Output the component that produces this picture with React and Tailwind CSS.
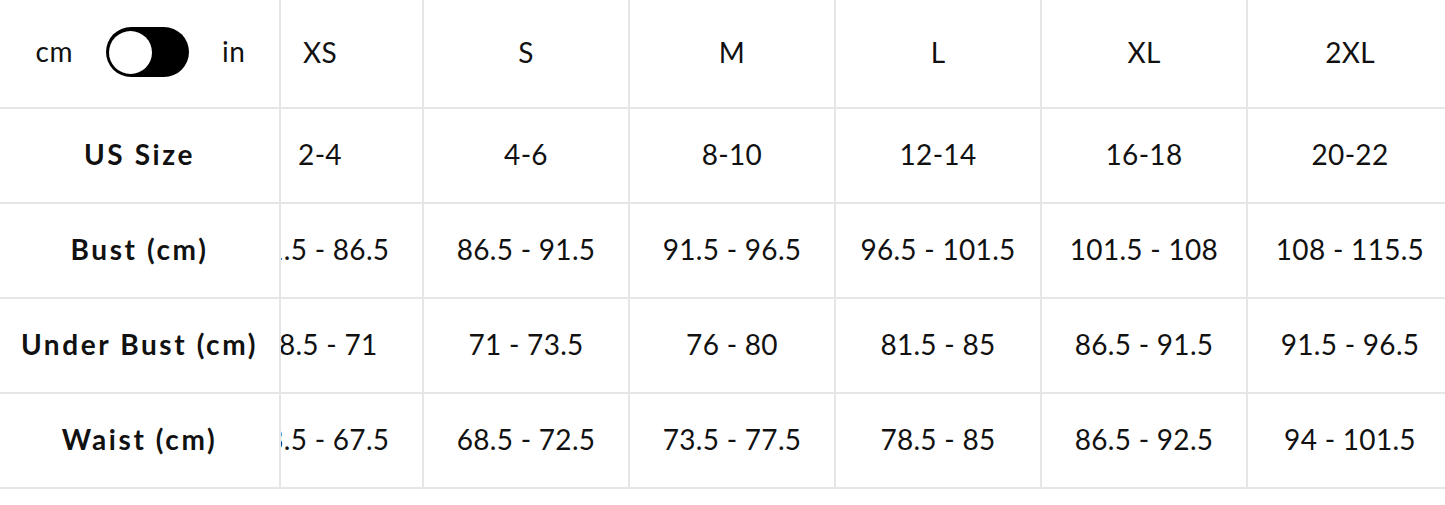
import React, { useState } from 'react';

const sizes = ['XS', 'S', 'M', 'L', 'XL', '2XL'];

const rows = [
  { label: 'US Size', values: ['2-4', '4-6', '8-10', '12-14', '16-18', '20-22'] },
  { label: 'Bust (cm)', values: ['81.5 - 86.5', '86.5 - 91.5', '91.5 - 96.5', '96.5 - 101.5', '101.5 - 108', '108 - 115.5'] },
  { label: 'Under Bust (cm)', values: ['68.5 - 71', '71 - 73.5', '76 - 80', '81.5 - 85', '86.5 - 91.5', '91.5 - 96.5'] },
  { label: 'Waist (cm)', values: ['63.5 - 67.5', '68.5 - 72.5', '73.5 - 77.5', '78.5 - 85', '86.5 - 92.5', '94 - 101.5'] },
];

const Toggle = ({ on, setOn }) => (
  <button
    onClick={() => setOn(!on)}
    className={`w-[83px] h-[50px] rounded-full bg-black flex items-center px-[3px] ${on ? 'justify-end' : 'justify-start'}`}
    aria-label="Toggle units"
  >
    <span className="block w-[43px] h-[43px] rounded-full bg-white" />
  </button>
);

const Row = ({ label, cells, header, children }) => (
  <div className={`flex border-b-2 border-[#e6e6e6] ${header ? 'h-[109px]' : 'h-[95px]'}`}>
    <div className="w-[281px] shrink-0 border-r-2 border-[#e6e6e6] bg-white relative z-10 flex items-center justify-center pb-[3px]">
      {children || <span className="font-bold text-[28px] tracking-[2.6px]">{label}</span>}
    </div>
    <div className="flex-1 overflow-hidden">
      <div className="flex h-full -ml-[63px]">
        {cells.map((c, i) => (
          <div key={i} className="w-[206px] shrink-0 border-r-2 border-[#e6e6e6] flex items-center justify-center pb-[3px] text-[28px] tracking-[0.3px] whitespace-nowrap">
            {c}
          </div>
        ))}
      </div>
    </div>
  </div>
);

export default function App() {
  const [inches, setInches] = useState(false);
  return (
    <div className="w-[1445px] h-[505px] bg-white text-[#111] font-['Lato','Liberation_Sans',sans-serif] overflow-hidden">
      <Row header cells={sizes}>
        <div className="flex items-center gap-[33px] text-[28px] tracking-[0.5px] pl-[2px]">
          <span className="-mt-[2px]">cm</span>
          <Toggle on={inches} setOn={setInches} />
          <span className="-mt-[2px]">in</span>
        </div>
      </Row>
      {rows.map((r) => (
        <Row key={r.label} label={r.label} cells={r.values} />
      ))}
    </div>
  );
}
